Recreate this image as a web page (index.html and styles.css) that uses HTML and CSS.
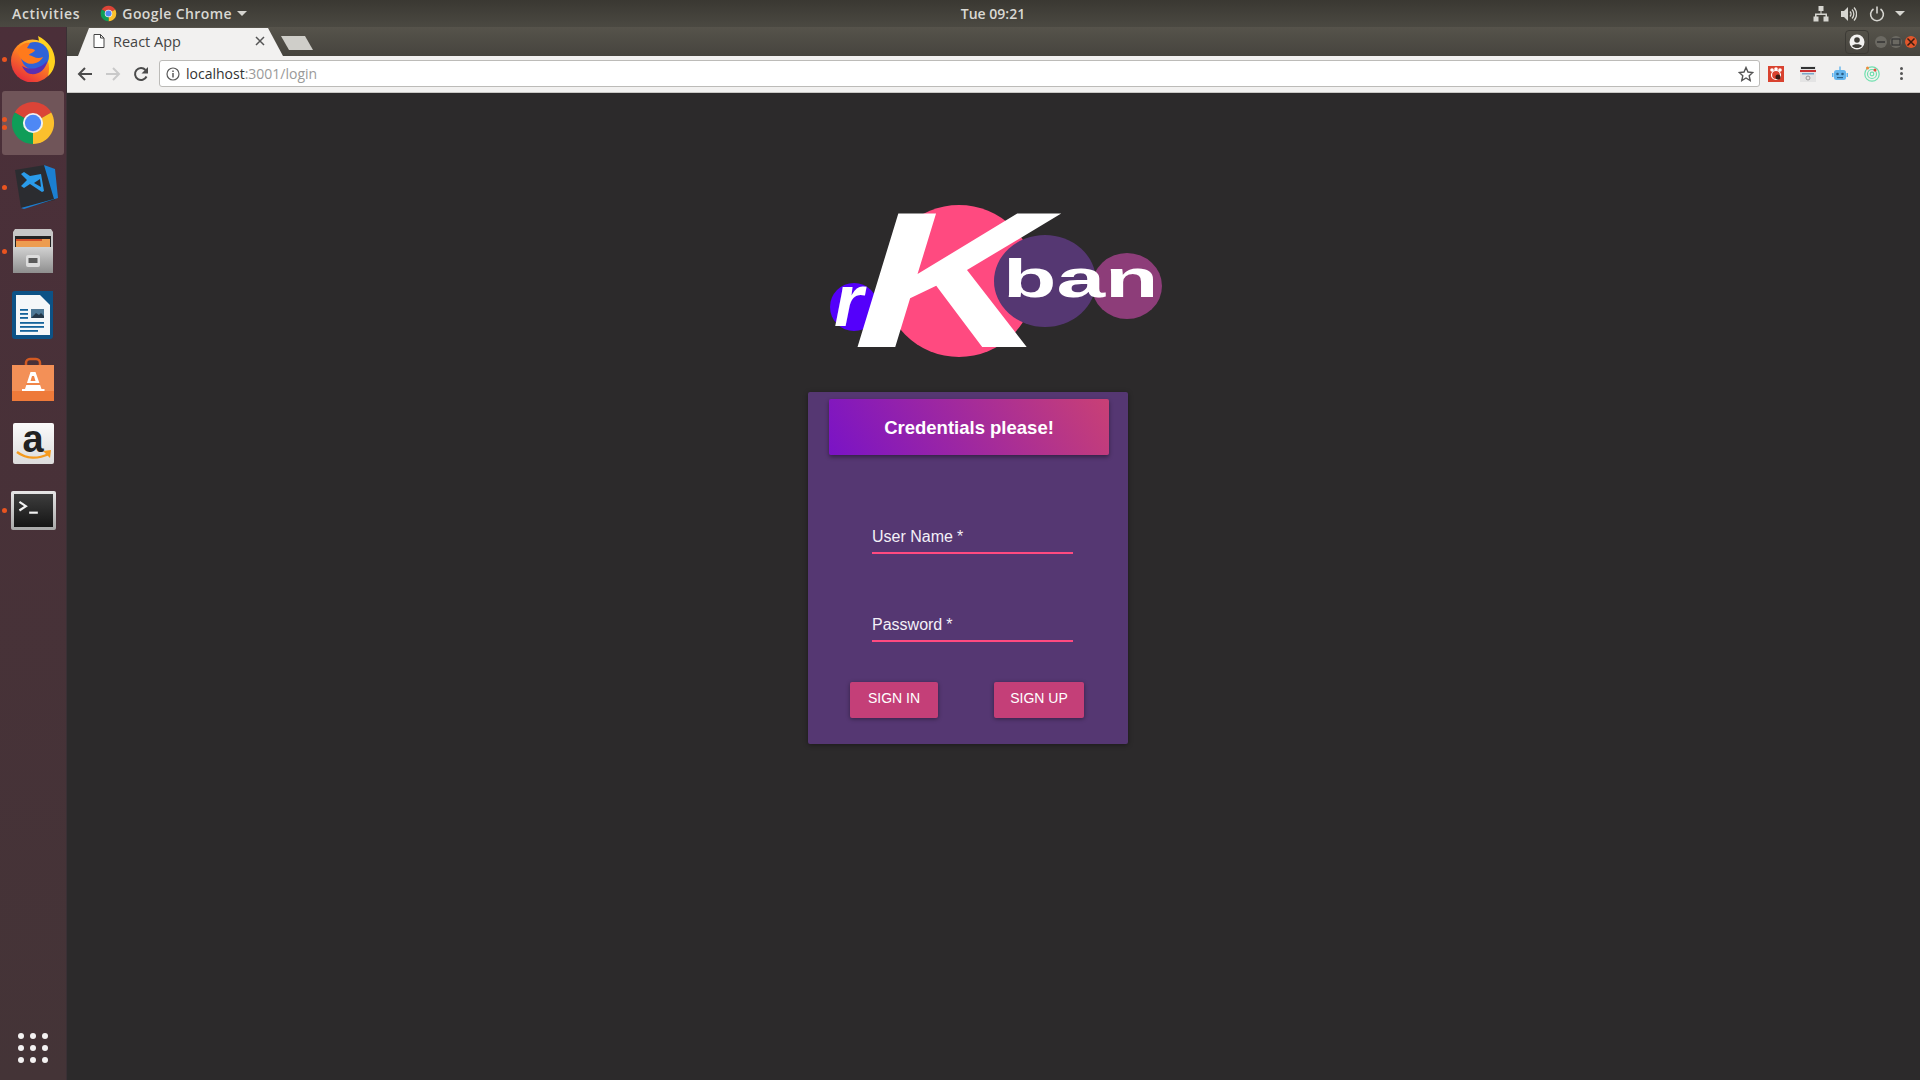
FILE: index.html
```html
<!DOCTYPE html>
<html lang="en">
<head>
    <meta charset="UTF-8">
    <title>React App</title>
    <link rel="stylesheet" href="styles.css">
</head>
<body>
    <svg class="defs" width="0" height="0">
        <defs>
            <symbol id="chrome" viewBox="0 0 48 48">
                <path fill="#db4437" d="M24 24L4.95 13A22 22 0 0 1 43.05 13Z"/>
                <path fill="#fbc02d" d="M24 24L43.05 13A22 22 0 0 1 24 46Z"/>
                <path fill="#0f9d58" d="M24 24L24 46A22 22 0 0 1 4.95 13Z"/>
                <circle cx="24" cy="24" r="10.5" fill="#f1f1f1"/>
                <circle cx="24" cy="24" r="8.5" fill="#4e88f5"/>
            </symbol>
        </defs>
    </svg>

    <header class="topbar">
        <div class="topbar-left">
            <span class="activities">Activities</span>
            <div class="app-menu">
                <svg class="app-menu-icon"><use href="#chrome"/></svg>
                <span>Google Chrome</span>
                <i class="caret"></i>
            </div>
        </div>
        <div class="clock">Tue 09:21</div>
        <div class="tray">
            <svg width="16" height="16" viewBox="0 0 16 16" fill="#d6d5d0">
                <path d="M5.5 0h5v5h-2v2.500h5.500v3h1.500v5h-5v-5h2v-1.500h-9v1.500h2v5h-5v-5h1.500v-3h5.500v-2.500h-2z"/>
            </svg>
            <svg width="16" height="16" viewBox="0 0 16 16" fill="none" stroke="#d6d5d0" stroke-width="1.300">
                <path fill="#d6d5d0" stroke="none" d="M0 5h3l4-4v14l-4-4h-3z"/>
                <path d="M9 5.500a3.500 3.500 0 0 1 0 5M11 3.500a6.500 6.500 0 0 1 0 9M13 1.500a9.500 9.500 0 0 1 0 13"/>
            </svg>
            <svg width="16" height="16" viewBox="0 0 16 16" fill="none" stroke="#d6d5d0" stroke-width="1.600">
                <path d="M4.500 3a6.400 6.400 0 1 0 7 0M8 .5v7"/>
            </svg>
            <i class="caret"></i>
        </div>
    </header>

    <div class="desktop">
        <nav class="dock">
            <div class="dock-item">
                <i class="run-dot"></i>
                <svg width="46" height="46" viewBox="0 0 46 46">
                    <defs>
                        <linearGradient id="foxOuter" x1="0.8" y1="0" x2="0.2" y2="1">
                            <stop offset="0" stop-color="#ffd83b"/>
                            <stop offset="0.4" stop-color="#ff8a1f"/>
                            <stop offset="1" stop-color="#e5243f"/>
                        </linearGradient>
                    </defs>
                    <circle cx="22.500" cy="25" r="21.500" fill="url(#foxOuter)"/>
                    <path fill="#ffd21e" d="M28 0c10 5 17 14 17 25 0 6-3 12-7 15 3-10 0-22-11-28 3-3 2-8 1-12z"/>
                    <circle cx="25" cy="20" r="14" fill="#2f62d8"/>
                    <path fill="#5a2fb0" d="M12 30c6 4 18 4 25-5-1 9-9 14-16 13-4 0-7-4-9-8z"/>
                    <path fill="#ff7a1c" d="M8 14c3-6 8-8 12-7l-3 5c2 1 5 0 8 2-1 3-5 3-6 5 4 1 8 5 14 2-3 6-12 9-18 5-5-3-7-8-7-12z"/>
                </svg>
            </div>
            <div class="dock-item is-active">
                <i class="run-dot double"></i>
                <svg width="46" height="46"><use href="#chrome"/></svg>
            </div>
            <div class="dock-item">
                <i class="run-dot"></i>
                <svg class="nudge" width="44" height="46" viewBox="0 0 44 46">
                    <path fill="#2b2c30" d="M1 6L31 1l10 35-34 8z"/>
                    <path fill="#1b7fd1" d="M30 1l11 4 3 29-34 11-3-1 33-9z"/>
                    <path fill="#2a9bea" d="M27 10l3 17-2 1-12-8-6 4-3-2 6-6-6-6 3-2 6 4zM26 15l-6 4 7 4z"/>
                </svg>
            </div>
            <div class="dock-item">
                <i class="run-dot"></i>
                <svg width="42" height="46" viewBox="0 0 42 46">
                    <defs>
                        <linearGradient id="drawer" x1="0" y1="0" x2="0" y2="1">
                            <stop offset="0" stop-color="#d2d2d2"/>
                            <stop offset="1" stop-color="#8e8e8e"/>
                        </linearGradient>
                    </defs>
                    <path fill="#c6c6c6" d="M3 1h36l2 3v40H1V4z"/>
                    <rect x="3" y="8" width="36" height="11" fill="#222"/>
                    <rect x="4" y="11" width="34" height="8" fill="#ed9c4f"/>
                    <rect x="4" y="11" width="26" height="2" fill="#d5502a"/>
                    <rect x="1" y="19" width="40" height="26" fill="url(#drawer)"/>
                    <rect x="14" y="27" width="14" height="12" rx="2" fill="#dcdcdc"/>
                    <rect x="16.500" y="30" width="9" height="5" fill="#5a5a5a"/>
                </svg>
            </div>
            <div class="dock-item">
                <svg width="42" height="48" viewBox="0 0 42 48">
                    <path fill="#0d5286" d="M3 0h28l10 10v35a3 3 0 0 1-3 3H3a3 3 0 0 1-3-3V3a3 3 0 0 1 3-3z"/>
                    <path fill="#f4f7f9" d="M4 4h24l10 10v30H4z"/>
                    <path fill="#0d5286" d="M28 0h13v13z"/>
                    <rect x="8" y="18" width="8" height="1.800" fill="#14639b"/>
                    <rect x="8" y="22" width="8" height="1.800" fill="#14639b"/>
                    <rect x="8" y="26" width="8" height="1.800" fill="#14639b"/>
                    <rect x="19" y="18" width="13" height="9" fill="#4d7896"/>
                    <path fill="#24384a" d="M19 27l5-5 3 2 2-2 3 3v2z"/>
                    <rect x="8" y="31" width="24" height="1.800" fill="#14639b"/>
                    <rect x="8" y="35" width="24" height="1.800" fill="#14639b"/>
                    <rect x="8" y="39" width="18" height="1.800" fill="#14639b"/>
                </svg>
            </div>
            <div class="dock-item">
                <svg width="42" height="44" viewBox="0 0 42 44">
                    <path fill="none" stroke="#d35a22" stroke-width="2.500" d="M14 12V6a4 4 0 0 1 4-4h6a4 4 0 0 1 4 4v6"/>
                    <path fill="#ee7a3a" d="M0 8h42v36H0z"/>
                    <path fill="#f39057" d="M0 8h42v26H0z"/>
                    <path fill="#fff" d="M18.500 15h5l6 17h3v2H10v-2h3z"/>
                    <path fill="#f08548" d="M20 19h2l1.500 5h-5zM14 26h14v2H14z"/>
                </svg>
            </div>
            <div class="dock-item">
                <div class="amazon-tile">
                    <span class="amazon-a">a</span>
                    <svg class="amazon-smile" width="38" height="12" viewBox="0 0 38 12">
                        <path fill="none" stroke="#f59a1e" stroke-width="2.400" d="M2 2c9 7 21 7 32 2"/>
                        <path fill="#f59a1e" d="M28 1l8-1-1 8z"/>
                    </svg>
                </div>
            </div>
            <div class="dock-item terminal-item">
                <i class="run-dot"></i>
                <div class="terminal-tile">
                    <svg width="36" height="28" viewBox="0 0 36 28" fill="none" stroke="#f2f2f2" stroke-width="2">
                        <path d="M5 6l6 4-6 4"/>
                        <path d="M14 16h8"/>
                    </svg>
                </div>
            </div>
            <div class="apps-grid">
                <i></i><i></i><i></i><i></i><i></i><i></i><i></i><i></i><i></i>
            </div>
        </nav>

        <div class="browser">
            <div class="tabstrip">
                <div class="tab">
                    <svg width="12" height="14" viewBox="0 0 12 14" fill="#fff" stroke="#444" stroke-width="1">
                        <path d="M1 .5h6.500l3.500 3.500v9.500h-10zM7.500 .5v3.500h3.500"/>
                    </svg>
                    <span class="tab-title">React App</span>
                    <svg class="tab-close" width="10" height="10" viewBox="0 0 10 10" stroke="#555" stroke-width="1.500">
                        <path d="M1 1l8 8M9 1l-8 8"/>
                    </svg>
                </div>
                <div class="new-tab"></div>
                <div class="strip-right">
                    <div class="profile">
                        <svg width="16" height="16" viewBox="0 0 16 16">
                            <circle cx="8" cy="8" r="7.500" fill="#f2f1f0"/>
                            <circle cx="8" cy="6" r="2.800" fill="#3f3d38"/>
                            <path fill="#3f3d38" d="M3 12c1-2.500 9-2.500 10 0-1.500 1.500-3 2-5 2s-3.500-.5-5-2z"/>
                        </svg>
                    </div>
                    <div class="win-buttons">
                        <span class="win-btn">
                            <svg width="12" height="12" viewBox="0 0 12 12"><path stroke="#333" stroke-width="1.500" d="M2 6h8"/></svg>
                        </span>
                        <span class="win-btn">
                            <svg width="12" height="12" viewBox="0 0 12 12"><rect x="2" y="3" width="8" height="6" fill="none" stroke="#333" stroke-width="1.200"/></svg>
                        </span>
                        <span class="win-btn close">
                            <svg width="12" height="12" viewBox="0 0 12 12"><path stroke="#3a1c10" stroke-width="1.500" d="M2.500 2.500l7 7M9.500 2.500l-7 7"/></svg>
                        </span>
                    </div>
                </div>
            </div>

            <div class="toolbar">
                <svg class="nav-icon" width="16" height="16" viewBox="0 0 16 16" fill="none" stroke="#4b4b4b" stroke-width="2">
                    <path d="M15 8H2M8 2L2 8l6 6"/>
                </svg>
                <svg class="nav-icon" width="16" height="16" viewBox="0 0 16 16" fill="none" stroke="#c9c9c9" stroke-width="2">
                    <path d="M1 8h13M8 2l6 6-6 6"/>
                </svg>
                <svg class="nav-icon" width="16" height="16" viewBox="0 0 16 16" fill="none" stroke="#4b4b4b" stroke-width="2">
                    <path d="M13.500 10.500A6 6 0 1 1 12.500 4"/>
                    <path fill="#4b4b4b" stroke="none" d="M15 1v6.500H8.500z"/>
                </svg>
                <div class="omnibox">
                    <svg width="14" height="14" viewBox="0 0 14 14" fill="none" stroke="#5a5a5a" stroke-width="1.200">
                        <circle cx="7" cy="7" r="6"/>
                        <path stroke-width="1.500" d="M7 6v4.500M7 3.500v1.500"/>
                    </svg>
                    <span class="url"><span class="url-host">localhost</span>:3001/login</span>
                    <svg class="star" width="16" height="16" viewBox="0 0 16 16" fill="none" stroke="#555" stroke-width="1.400">
                        <path d="M8 1.500l2 4.500 4.800.5-3.600 3.200 1 4.800L8 12l-4.200 2.500 1-4.800L1.200 6.500 6 6z"/>
                    </svg>
                </div>
                <div class="extensions">
                    <svg width="16" height="16" viewBox="0 0 16 16">
                        <rect width="16" height="16" fill="#d9422f"/>
                        <circle cx="8" cy="9" r="4.500" fill="none" stroke="#fff" stroke-width="1.200"/>
                        <circle cx="4" cy="4" r="1.800" fill="#fff"/>
                        <circle cx="8" cy="3" r="1.800" fill="#fff"/>
                        <circle cx="12" cy="4" r="1.800" fill="#fff"/>
                        <circle cx="10" cy="11" r="2.500" fill="#3a1a14"/>
                    </svg>
                    <svg width="16" height="16" viewBox="0 0 16 16">
                        <rect width="16" height="16" fill="#e4e4e4"/>
                        <rect x="1" y="1" width="14" height="2" fill="#333"/>
                        <rect x="0" y="4" width="16" height="2" fill="#c33"/>
                        <rect x="2" y="7" width="12" height="1.500" fill="#7aa7c9"/>
                        <circle cx="8" cy="12" r="2" fill="none" stroke="#999"/>
                    </svg>
                    <svg width="16" height="16" viewBox="0 0 16 16">
                        <rect x="2" y="4" width="12" height="10" rx="2.500" fill="#63b5ee"/>
                        <rect x="7.300" y="0.500" width="1.400" height="4" fill="#63b5ee"/>
                        <rect x="0" y="7" width="1.500" height="4" fill="#63b5ee"/>
                        <rect x="14.500" y="7" width="1.500" height="4" fill="#63b5ee"/>
                        <circle cx="5.500" cy="8" r="1.300" fill="#2c5f86"/>
                        <circle cx="10.500" cy="8" r="1.300" fill="#2c5f86"/>
                        <rect x="5" y="11" width="6" height="1.200" fill="#2c5f86"/>
                    </svg>
                    <svg width="16" height="16" viewBox="0 0 16 16" fill="none" stroke="#6fe0ae" stroke-width="1.200">
                        <circle cx="8" cy="8" r="7.200"/>
                        <circle cx="8" cy="8" r="4.500"/>
                        <circle cx="8" cy="8" r="1.800"/>
                        <circle cx="3.500" cy="2" r="1.500" fill="#f08a3c" stroke="none"/>
                        <circle cx="11" cy="4" r="1.500" fill="#e5503c" stroke="none"/>
                    </svg>
                </div>
                <div class="chrome-menu"><i></i><i></i><i></i></div>
            </div>

            <main class="page">
                <svg class="logo" width="400" height="210" viewBox="780 165 400 210">
                    <circle class="logo-r" cx="854" cy="307" r="24"/>
                    <ellipse class="logo-k" cx="959" cy="281" rx="76" ry="76"/>
                    <ellipse class="logo-mauve" cx="1127" cy="286" rx="35" ry="33"/>
                    <ellipse class="logo-purple" cx="1045" cy="281" rx="51" ry="46"/>
                    <text class="logo-text" transform="translate(834 326)" font-size="75" font-style="italic">r</text>
                    <text class="logo-text" transform="translate(840 347) skewX(-17) scale(1.350 1)" font-size="194">K</text>
                    <text class="logo-text" transform="translate(1003 297) scale(1.620 1)" font-size="54">ban</text>
                </svg>

                <section class="card">
                    <div class="card-head">Credentials please!</div>
                    <form class="login-form">
                        <div class="field">User Name<span class="req">*</span></div>
                        <div class="field">Password<span class="req">*</span></div>
                        <div class="actions">
                            <button type="button" class="btn">Sign in</button>
                            <button type="button" class="btn wide">Sign up</button>
                        </div>
                    </form>
                </section>
            </main>
        </div>
    </div>
</body>
</html>
```

FILE: styles.css
```css
* {
    box-sizing: border-box;
}
html, body {
    height: 100%;
}
body {
    margin: 0;
    overflow: hidden;
    display: flex;
    flex-direction: column;
    background-color: #2c2a2b;
    font-family: "Liberation Sans", Arial, sans-serif;
}
.defs {
    display: none;
}

/* ubuntu top bar */
.topbar {
    height: 27px;
    flex: none;
    display: grid;
    grid-template-columns: 1fr auto 1fr;
    align-items: center;
    padding: 0 12px;
    background: linear-gradient(#3a3832, #4b4942);
    color: #d9d8d3;
    font-family: "Open Sans", sans-serif;
    font-size: 14px;
    font-weight: 600;
}
.topbar-left {
    display: flex;
    align-items: center;
    gap: 20px;
}
.activities {
    letter-spacing: 0.7px;
}
.app-menu {
    display: flex;
    align-items: center;
    gap: 5px;
    letter-spacing: 0.4px;
}
.app-menu-icon {
    width: 17px;
    height: 17px;
}
.caret {
    display: inline-block;
    width: 0;
    height: 0;
    border-left: 5px solid transparent;
    border-right: 5px solid transparent;
    border-top: 5px solid #d6d5d0;
}
.clock {
    margin-left: 66px;
}
.tray {
    justify-self: end;
    display: flex;
    align-items: center;
    gap: 12px;
    padding-right: 3px;
}
.tray .caret {
    margin-left: -2px;
}

.desktop {
    flex: 1;
    display: flex;
    min-height: 0;
}

/* launcher */
.dock {
    position: relative;
    width: 67px;
    flex: none;
    padding: 0 2px;
    background: linear-gradient(#4b2f39, #443437);
    border-right: 1px solid #3a3035;
}
.dock-item {
    position: relative;
    height: 64px;
    display: flex;
    align-items: center;
    justify-content: center;
}
.dock-item.is-active {
    background-color: #705559;
    border-radius: 3px;
}
.terminal-item {
    margin-top: 3px;
}
.nudge {
    margin-left: 5px;
}
.run-dot {
    position: absolute;
    left: 0;
    top: 50%;
    width: 5px;
    height: 5px;
    margin-top: -2px;
    border-radius: 50%;
    background-color: #e95420;
}
.run-dot.double {
    margin-top: -6px;
    box-shadow: 0 8px 0 #e95420;
}
.amazon-tile {
    position: relative;
    width: 41px;
    height: 41px;
    border-radius: 2px;
    background: linear-gradient(#fafafa, #dcdcdc);
    text-align: center;
    font-size: 38px;
    line-height: 32px;
    font-weight: bold;
    color: #222;
}
.amazon-smile {
    position: absolute;
    left: 2px;
    bottom: 2px;
}
.terminal-tile {
    width: 45px;
    height: 39px;
    padding: 3px;
    border-radius: 2px;
    background: linear-gradient(#e6e6e6, #a8a8a8);
}
.terminal-tile svg {
    display: block;
    width: 39px;
    height: 33px;
    background: linear-gradient(#3d3d3d, #151515);
}
.apps-grid {
    position: absolute;
    left: 18px;
    bottom: 17px;
    display: grid;
    grid-template-columns: repeat(3, 6px);
    gap: 6px;
}
.apps-grid i {
    width: 6px;
    height: 6px;
    border-radius: 50%;
    background-color: #f4f2f2;
}

/* browser chrome */
.browser {
    flex: 1;
    min-width: 0;
    display: flex;
    flex-direction: column;
}
.tabstrip {
    height: 29px;
    flex: none;
    display: flex;
    align-items: flex-end;
    padding-left: 11px;
    background: linear-gradient(#56534b, #46443e);
}
.tab {
    width: 205px;
    height: 28px;
    display: flex;
    align-items: center;
    padding: 0 18px 2px 15px;
    background-color: #f2f1f0;
    clip-path: polygon(0 100%, 11px 0, 190px 0, 205px 100%);
    font-family: "Open Sans", sans-serif;
    font-size: 14.500px;
    color: #444;
}
.tab-title {
    flex: 1;
    margin-left: 8px;
}
.new-tab {
    width: 32px;
    height: 14px;
    margin: 0 0 6px -2px;
    background-color: #cfcec9;
    clip-path: polygon(0 0, 24px 0, 32px 100%, 8px 100%);
}
.strip-right {
    flex: 1;
    align-self: stretch;
    display: flex;
    align-items: center;
    justify-content: flex-end;
}
.profile {
    width: 24px;
    height: 24px;
    display: flex;
    align-items: center;
    justify-content: center;
    margin-right: 6px;
    border: 1px solid #3c3a35;
    border-radius: 4px;
}
.win-buttons {
    display: flex;
    gap: 3px;
    margin-right: 3px;
}
.win-btn {
    width: 12px;
    height: 12px;
    border-radius: 50%;
    background-color: #6b6962;
}
.win-btn svg {
    display: block;
}
.win-btn.close {
    background-color: #e2562b;
}

.toolbar {
    height: 37px;
    flex: none;
    display: flex;
    align-items: center;
    padding: 0 17px 1px 10px;
    background-color: #f2f1f0;
    border-bottom: 1px solid #c9c8c5;
}
.nav-icon {
    margin-right: 12px;
}
.omnibox {
    flex: 1;
    height: 27px;
    display: flex;
    align-items: center;
    gap: 6px;
    padding: 0 5px 0 6px;
    margin-left: -2px;
    background-color: #fff;
    border: 1px solid #bcbbb8;
    border-radius: 3px;
    font-family: "Open Sans", sans-serif;
    font-size: 14px;
    color: #9a9a9a;
}
.url {
    flex: 1;
}
.url-host {
    color: #333;
}
.extensions {
    display: flex;
    gap: 16px;
    margin-left: 8px;
}
.chrome-menu {
    display: grid;
    gap: 2px;
    margin-left: 20px;
}
.chrome-menu i {
    width: 3px;
    height: 3px;
    border-radius: 50%;
    background-color: #555;
}

/* page */
.page {
    flex: 1;
    padding-top: 72px;
    background-color: #2c2a2b;
}
.logo {
    display: block;
    margin: 0 0 17px 713px;
    overflow: visible;
}
.logo-r { fill: #5400fb; }
.logo-k { fill: #ff4a80; }
.logo-purple { fill: #553772; }
.logo-mauve { fill: #8d3d79; }
.logo-text {
    fill: #fff;
    font-family: "Liberation Sans", Arial, sans-serif;
    font-weight: bold;
}
.card {
    width: 320px;
    height: 352px;
    margin-left: 741px;
    padding-top: 7px;
    background-color: #553772;
    border-radius: 2px;
    box-shadow: 0 1px 5px rgba(0, 0, 0, 0.4);
}
.card-head {
    width: 280px;
    height: 56px;
    margin-left: 21px;
    padding-top: 2px;
    display: flex;
    align-items: center;
    justify-content: center;
    background: linear-gradient(60deg, #7a13c6, #c94075);
    border-radius: 2px;
    box-shadow: 0 2px 4px rgba(0, 0, 0, 0.4);
    color: #fff;
    font-size: 18.500px;
    font-weight: bold;
}
.login-form {
    display: flex;
    flex-direction: column;
    padding-top: 70px;
}
.field {
    width: 201px;
    height: 29px;
    margin: 0 0 59px 64px;
    border-bottom: 2px solid #ff4a80;
    color: #f3f0f7;
    font-size: 16px;
    line-height: 24px;
}
.field:nth-child(2) {
    margin-bottom: 40px;
}
.req {
    margin-left: 4px;
}
.actions {
    display: flex;
    gap: 56px;
    margin-left: 42px;
}
.btn {
    width: 88px;
    height: 36px;
    padding: 0 0 5px;
    border: 0;
    border-radius: 2px;
    background-color: #c43f78;
    box-shadow: 0 1px 4px rgba(0, 0, 0, 0.4);
    color: #fff;
    font-family: "Liberation Sans", Arial, sans-serif;
    font-size: 14px;
    text-transform: uppercase;
}
.btn.wide {
    width: 90px;
}
```
